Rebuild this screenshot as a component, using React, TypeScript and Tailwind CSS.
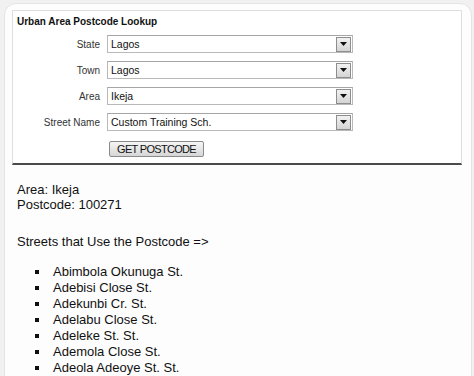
import React from "react";

const rows = [
  { label: "State", value: "Lagos" },
  { label: "Town", value: "Lagos" },
  { label: "Area", value: "Ikeja" },
  { label: "Street Name", value: "Custom Training Sch." },
];

const streets = [
  "Abimbola Okunuga St.",
  "Adebisi Close St.",
  "Adekunbi Cr. St.",
  "Adelabu Close St.",
  "Adeleke St. St.",
  "Ademola Close St.",
  "Adeola Adeoye St. St.",
];

function FakeSelect({ value }: { value: string }) {
  return (
    <div className="flex h-[18px] w-[246px] items-center border border-[#b9b9b9] border-t-[#a5a5a5] bg-white pl-[3px] pr-[1px]">
      <span className="flex-1 text-[10.5px] leading-none text-[#111]">{value}</span>
      <span className="flex h-[15px] w-[15px] items-center justify-center border border-[#8d8d8d] bg-gradient-to-b from-[#f2f2f2] to-[#d4d4d4]">
        <svg width="7" height="4" viewBox="0 0 7 4">
          <path d="M0 0h7L3.5 4z" fill="#111" />
        </svg>
      </span>
    </div>
  );
}

export default function App() {
  return (
    <div
      className="h-[376px] w-[474px] overflow-hidden bg-[#f1f1f1] pl-[4px] pr-[2px] pt-[3px]"
      style={{ fontFamily: '"Liberation Sans", Arial, sans-serif' }}
    >
      <div className="h-[400px] rounded-tl-[12px] rounded-tr-[12px] border border-[#e4e4e4] bg-[#fdfdfd] pl-[7px] pr-[9px] pt-[6px]">
        <div className="border border-b-2 border-[#dedede] border-b-[#4a4a4a] bg-white pb-[6px] pt-[5px]">
          <div className="pl-[4px] text-[10px] font-bold leading-[12px] text-[#111]">
            Urban Area Postcode Lookup
          </div>
          <div className="mt-[7px] grid grid-cols-[87px_246px] gap-x-[7px] gap-y-[8px]">
            {rows.map((r) => (
              <React.Fragment key={r.label}>
                <div className="flex items-center justify-end text-[10px] text-[#333]">
                  {r.label}
                </div>
                <FakeSelect value={r.value} />
              </React.Fragment>
            ))}
            <div />
            <div className="mt-[2px] pl-[2px]">
              <button className="flex h-[16px] w-[95px] items-center justify-center rounded-[2px] border border-[#8a8a8a] bg-gradient-to-b from-[#f6f6f6] to-[#d6d6d6] text-[11px] tracking-[-0.7px] leading-none text-[#111]">
                GET POSTCODE
              </button>
            </div>
          </div>
        </div>
        <div className="pl-[5px] pt-[17px] text-[13px] text-[#111]">
          <div className="leading-[15px]">Area: Ikeja</div>
          <div className="leading-[15px]">Postcode: 100271</div>
          <div className="mt-[22px] leading-[15px]">Streets that Use the Postcode =&gt;</div>
          <ul className="mt-[15px]">
            {streets.map((s) => (
              <li key={s} className="flex items-center leading-[16px]">
                <span className="ml-[18px] mr-[14px] h-[4px] w-[4px] bg-[#111]" />
                {s}
              </li>
            ))}
          </ul>
        </div>
      </div>
    </div>
  );
}
